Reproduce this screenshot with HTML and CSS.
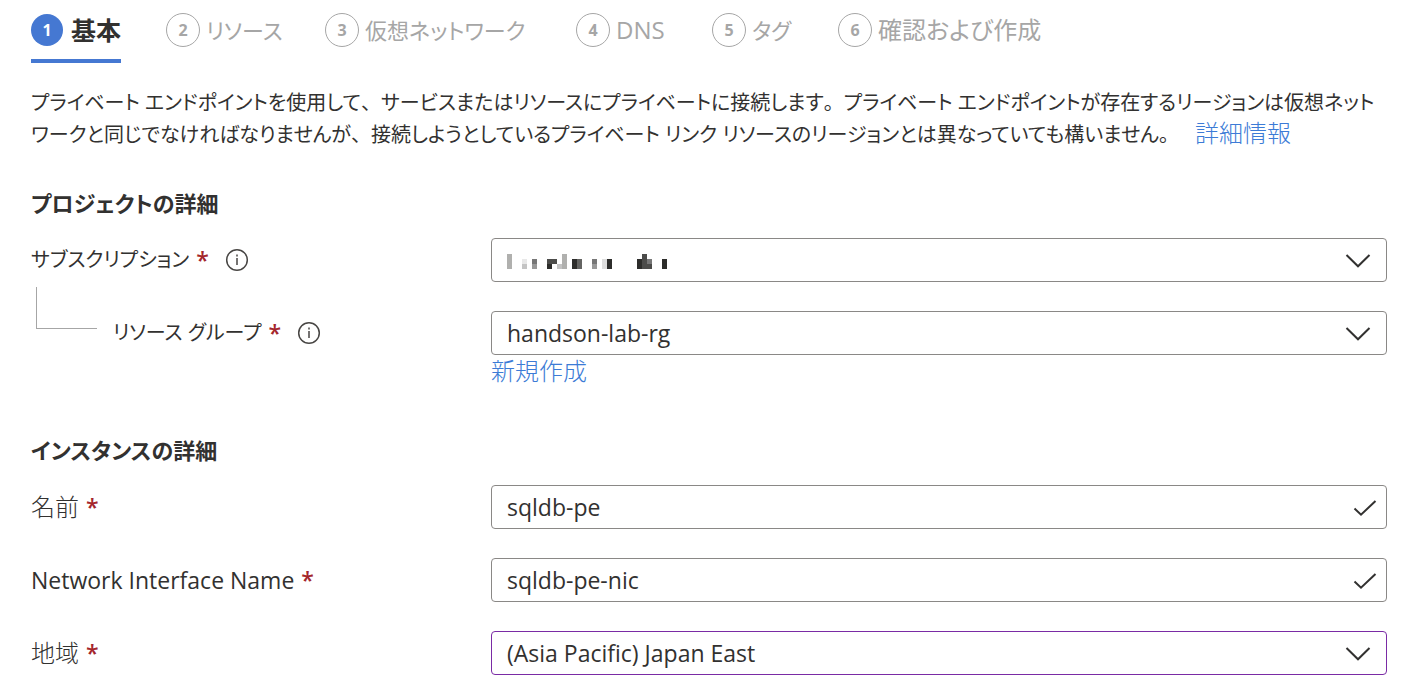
FILE: index.html
```html
<!DOCTYPE html>
<html lang="ja">
<head>
<meta charset="utf-8">
<meta name="viewport" content="width=device-width, initial-scale=1">
<title>プライベート エンドポイントを作成する</title>
<link rel="stylesheet" href="styles.css">
</head>
<body>
<svg class="defs" aria-hidden="true">
  <symbol id="chevron" viewBox="0 0 26 16"><path d="M1.500 3 13 14.300 24.500 3"/></symbol>
  <symbol id="check" viewBox="0 0 24 18"><path d="M1.500 9.500 8 15.700 22.500 2"/></symbol>
  <symbol id="info" viewBox="0 0 24 24"><circle cx="12" cy="12" r="10.300"/><path d="M12 10v7M12 6.500v2"/></symbol>
</svg>
<main class="page">
  <nav class="steps" aria-label="手順">
    <button class="step step-active" type="button"><span class="num">1</span><span>基本</span></button>
    <button class="step kana" type="button"><span class="num">2</span><span>リソース</span></button>
    <button class="step kana" type="button"><span class="num">3</span><span>仮想ネットワーク</span></button>
    <button class="step" type="button"><span class="num">4</span><span>DNS</span></button>
    <button class="step kana" type="button"><span class="num">5</span><span>タグ</span></button>
    <button class="step" type="button"><span class="num">6</span><span>確認および作成</span></button>
  </nav>

  <p class="intro">プライベート エンドポイントを使用して<span class="stop">、</span>サービスまたはリソースにプライベートに接続します<span class="stop">。</span>プライベート エンドポイントが存在するリージョンは仮想ネット<br>ワークと同じでなければなりませんが<span class="stop">、</span>接続しようとしているプライベート リンク リソースのリージョンとは異なっていても構いません<span class="stop">。</span><a class="link more" href="#">詳細情報</a></p>

  <form>
    <section class="section">
      <h2 class="title">プロジェクトの詳細</h2>
      <div class="rows">
        <div class="row">
          <div class="caption"><label class="kana-label" for="subscription">サブスクリプション</label><span class="req">*</span><svg class="info" role="img" aria-label="情報"><use href="#info"/></svg></div>
          <div class="field">
            <select id="subscription" class="control"><option></option></select>
            <svg class="mask" viewBox="0 0 32 3" shape-rendering="crispEdges" aria-hidden="true">
              <path fill="#b0b0ae" d="M0 0h1v3H0zM11 0h1v3h-1z"/>
              <path fill="#e8e8e8" d="M3 1h1v1H3z"/>
              <path fill="#c4c4c4" d="M3 2h1v1H3zM10 2h1v1h-1z"/>
              <path fill="#777" d="M5 1h1v1H5zM17 1h1v1h-1zM28 1h1v1h-1z"/>
              <path fill="#999" d="M5 2h1v1H5zM17 2h1v1h-1z"/>
              <path fill="#4c4c4a" d="M8 1h2v1H8zM27 0h1v3h-1zM28 2h1v1h-1z"/>
              <path fill="#646462" d="M14 1h1v2h-1z"/>
              <path fill="#ddd" d="M19 1h1v2h-1z"/>
              <path fill="#2d2d2b" d="M8 2h1v1H8zM13 1h1v2h-1zM20 1h1v2h-1zM26 1h1v2h-1zM31 1h1v2h-1z"/>
            </svg>
            <svg class="chevron" aria-hidden="true"><use href="#chevron"/></svg>
          </div>
        </div>
        <div class="row">
          <div class="caption"><span class="branch"></span><label class="kana-label" for="group">リソース グループ</label><span class="req">*</span><svg class="info" role="img" aria-label="情報"><use href="#info"/></svg></div>
          <div class="field">
            <select id="group" class="control"><option>handson-lab-rg</option></select>
            <svg class="chevron" aria-hidden="true"><use href="#chevron"/></svg>
          </div>
          <a class="link create" href="#">新規作成</a>
        </div>
      </div>
    </section>

    <section class="section">
      <h2 class="title">インスタンスの詳細</h2>
      <div class="rows">
        <div class="row">
          <div class="caption"><label class="kanji-label" for="name">名前</label><span class="req">*</span></div>
          <div class="field">
            <input id="name" class="control" type="text" value="sqldb-pe">
            <svg class="check" aria-hidden="true"><use href="#check"/></svg>
          </div>
        </div>
        <div class="row">
          <div class="caption"><label for="nic">Network Interface Name</label><span class="req">*</span></div>
          <div class="field">
            <input id="nic" class="control" type="text" value="sqldb-pe-nic">
            <svg class="check" aria-hidden="true"><use href="#check"/></svg>
          </div>
        </div>
        <div class="row">
          <div class="caption"><label class="kanji-label" for="region">地域</label><span class="req">*</span></div>
          <div class="field">
            <select id="region" class="control edited"><option>(Asia Pacific) Japan East</option></select>
            <svg class="chevron" aria-hidden="true"><use href="#chevron"/></svg>
          </div>
        </div>
      </div>
    </section>
  </form>
</main>
</body>
</html>
```
FILE: styles.css
```css
* { box-sizing: border-box; }

body {
  margin: 0;
  background: #fff;
  color: #323130;
  font-family: "Open Sans", "Noto Sans CJK JP", sans-serif;
  font-size: 23px;
  line-height: 32px;
  font-feature-settings: "palt";
}

.defs { position: absolute; width: 0; height: 0; }

.page { padding: 0 14px 16px 31px; }

.steps {
  display: grid;
  grid-template-columns: 135px 159px 251px 136px 126px 1fr;
  justify-items: start;
}

.step {
  display: flex;
  align-items: center;
  gap: 6px;
  height: 63px;
  padding: 0 0 4px;
  border: 0;
  background: none;
  color: #a6a6a6;
  font: inherit;
  font-feature-settings: inherit;
  font-size: 24px;
  white-space: nowrap;
}

.kana { font-size: 22px; }

.num {
  display: flex;
  align-items: center;
  justify-content: center;
  width: 34px;
  height: 34px;
  border: 1px solid #a6a6a6;
  border-radius: 50%;
  font-size: 16px;
  font-weight: 700;
}

.step-active {
  gap: 8px;
  padding-bottom: 0;
  border-bottom: 4px solid #4578d2;
  color: #323130;
  font-size: 25px;
  font-weight: 600;
}

.step-active .num {
  width: 32px;
  height: 32px;
  border: 0;
  background: #4578d2;
  color: #fff;
}

.intro {
  margin: 24px 0 0;
  font-size: 20px;
  white-space: nowrap;
}

/* Punctuation keeps its full-width cell */
.stop { font-feature-settings: normal; }

.link { color: #3c7bd6; font-size: 24px; font-weight: 300; line-height: 24px; text-decoration: none; }
.more { margin-left: 16px; }

.section { padding-top: 36px; }
.section + .section { padding-top: 47px; }

.title {
  margin: 0 0 19px;
  font-size: 22px;
  font-weight: 600;
  line-height: 32px;
}

.rows { display: grid; gap: 29px; }

.row {
  display: grid;
  grid-template-columns: 460px 1fr;
}

.caption { display: flex; align-items: center; height: 44px; }
.kana-label { font-size: 20px; }
.kanji-label { font-size: 24px; font-weight: 300; }
.req { margin-left: 7px; color: #a4262c; font-weight: 600; }
.info { width: 24px; height: 24px; margin-left: 16px; fill: none; stroke: #484644; stroke-width: 1.5; }

.branch {
  align-self: flex-start;
  width: 61px;
  height: 42px;
  margin: -24px 16px 0 5px;
  border: solid #a6a6a6;
  border-width: 0 0 1px 1px;
}

.field { position: relative; }

.control {
  display: block;
  appearance: none;
  width: 100%;
  height: 44px;
  padding: 0 56px 0 15px;
  border: 1px solid #8a8886;
  border-radius: 4px;
  background: #fff;
  color: #323130;
  font: inherit;
}

.edited { border-color: #7a2ba5; }

.chevron, .check {
  position: absolute;
  top: 14px;
  fill: none;
  stroke: #323130;
  stroke-width: 2;
  pointer-events: none;
}
.chevron { right: 16px; width: 26px; height: 16px; }
.check { right: 10px; width: 24px; height: 18px; }

.mask { position: absolute; left: 16px; top: 16px; width: 160px; height: 15px; pointer-events: none; }

.create { grid-column: 2; justify-self: start; line-height: 32px; }
```
